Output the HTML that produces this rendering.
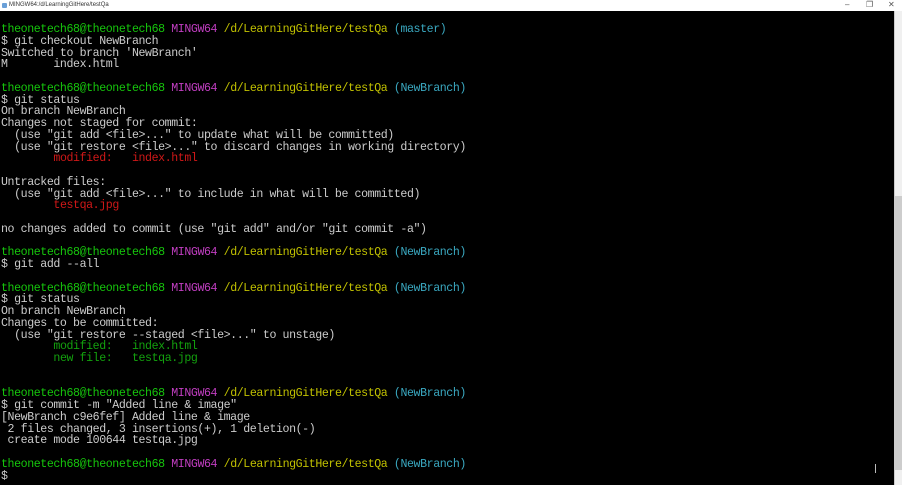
<!DOCTYPE html>
<html><head><meta charset="utf-8"><style>
html,body{margin:0;padding:0;width:902px;height:485px;overflow:hidden;background:#000}
.tb{position:absolute;left:0;top:0;width:902px;height:11px;background:#fff;font:6px "Liberation Sans",sans-serif;color:#333}
.tb .t{position:absolute;left:9px;top:2px}
.tb .ic{position:absolute;left:2px;top:3px;width:5px;height:5px;background:#6aa0d8;border-radius:1px}
.ctl{position:absolute;top:0;font:8px "Liberation Sans",sans-serif;color:#555}
.sb{position:absolute;left:894px;top:11px;width:8px;height:474px;background:#f0f0f0;border-left:1px solid #ccc}
.th{position:absolute;left:895px;top:196px;width:7px;height:274px;background:#cdcdcd}
pre{position:absolute;left:1px;top:24px;margin:0;font:11.6px/11.75px "Liberation Mono",monospace;letter-spacing:-0.41px;color:#cccccc}
.g{color:#16c60c}.m{color:#c23ec2}.y{color:#c1c100}.c{color:#3aa8c0}.r{color:#d01818}.gr{color:#13a10e}
.cur{position:absolute;left:875px;top:464px;width:1px;height:9px;background:#bbb}
</style></head><body>
<div class="tb"><div class="ic"></div><div class="t">MINGW64:/d/LearningGitHere/testQa</div>
<div class="ctl" style="left:845px">–</div><div class="ctl" style="left:866px">❐</div><div class="ctl" style="left:888px">✕</div></div>
<pre><span class="g">theonetech68@theonetech68</span> <span class="m">MINGW64</span> <span class="y">/d/LearningGitHere/testQa</span> <span class="c">(master)</span>
$ git checkout NewBranch
Switched to branch 'NewBranch'
M       index.html

<span class="g">theonetech68@theonetech68</span> <span class="m">MINGW64</span> <span class="y">/d/LearningGitHere/testQa</span> <span class="c">(NewBranch)</span>
$ git status
On branch NewBranch
Changes not staged for commit:
  (use "git add &lt;file&gt;..." to update what will be committed)
  (use "git restore &lt;file&gt;..." to discard changes in working directory)
        <span class="r">modified:   index.html</span>

Untracked files:
  (use "git add &lt;file&gt;..." to include in what will be committed)
        <span class="r">testqa.jpg</span>

no changes added to commit (use "git add" and/or "git commit -a")

<span class="g">theonetech68@theonetech68</span> <span class="m">MINGW64</span> <span class="y">/d/LearningGitHere/testQa</span> <span class="c">(NewBranch)</span>
$ git add --all

<span class="g">theonetech68@theonetech68</span> <span class="m">MINGW64</span> <span class="y">/d/LearningGitHere/testQa</span> <span class="c">(NewBranch)</span>
$ git status
On branch NewBranch
Changes to be committed:
  (use "git restore --staged &lt;file&gt;..." to unstage)
        <span class="gr">modified:   index.html</span>
        <span class="gr">new file:   testqa.jpg</span>


<span class="g">theonetech68@theonetech68</span> <span class="m">MINGW64</span> <span class="y">/d/LearningGitHere/testQa</span> <span class="c">(NewBranch)</span>
$ git commit -m "Added line &amp; image"
[NewBranch c9e6fef] Added line &amp; image
 2 files changed, 3 insertions(+), 1 deletion(-)
 create mode 100644 testqa.jpg

<span class="g">theonetech68@theonetech68</span> <span class="m">MINGW64</span> <span class="y">/d/LearningGitHere/testQa</span> <span class="c">(NewBranch)</span>
$</pre>
<div class="sb"></div><div class="th"></div>
<div class="cur"></div>
</body></html>
